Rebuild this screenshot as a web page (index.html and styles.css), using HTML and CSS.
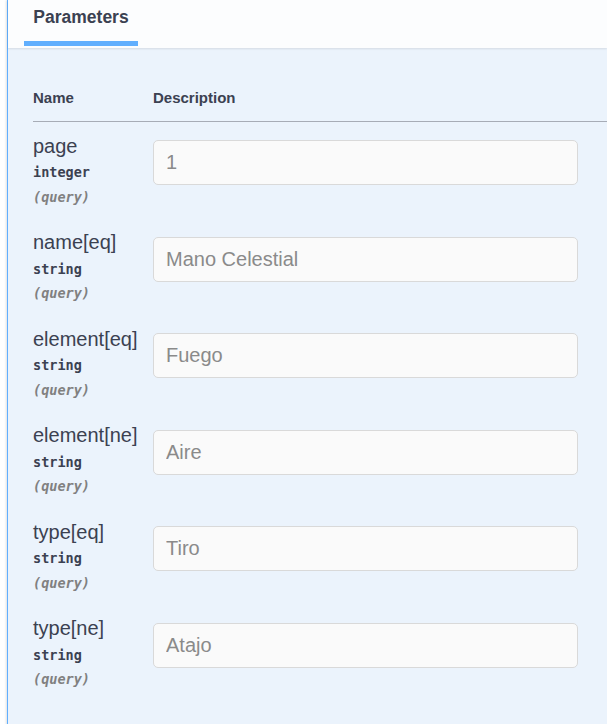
FILE: index.html
```html
<!DOCTYPE html>
<html>
<head>
<meta charset="utf-8">
<link rel="stylesheet" href="styles.css">
</head>
<body>
<div class="opblock">
  <div class="section-header">
    <div class="tab-item">
      <h4 class="tab-title">Parameters</h4>
      <div class="tab-bar"></div>
    </div>
  </div>
  <div class="table-container">
    <div class="thead">
      <div class="col-name">Name</div>
      <div class="col-desc">Description</div>
    </div>
    <div class="row">
      <div class="col-name">
        <div class="p-name">page</div>
        <div class="p-type">integer</div>
        <div class="p-in">(query)</div>
      </div>
      <div class="col-desc"><input class="p-input" type="text" placeholder="1"></div>
    </div>
    <div class="row">
      <div class="col-name">
        <div class="p-name">name[eq]</div>
        <div class="p-type">string</div>
        <div class="p-in">(query)</div>
      </div>
      <div class="col-desc"><input class="p-input" type="text" placeholder="Mano Celestial"></div>
    </div>
    <div class="row">
      <div class="col-name">
        <div class="p-name">element[eq]</div>
        <div class="p-type">string</div>
        <div class="p-in">(query)</div>
      </div>
      <div class="col-desc"><input class="p-input" type="text" placeholder="Fuego"></div>
    </div>
    <div class="row">
      <div class="col-name">
        <div class="p-name">element[ne]</div>
        <div class="p-type">string</div>
        <div class="p-in">(query)</div>
      </div>
      <div class="col-desc"><input class="p-input" type="text" placeholder="Aire"></div>
    </div>
    <div class="row">
      <div class="col-name">
        <div class="p-name">type[eq]</div>
        <div class="p-type">string</div>
        <div class="p-in">(query)</div>
      </div>
      <div class="col-desc"><input class="p-input" type="text" placeholder="Tiro"></div>
    </div>
    <div class="row">
      <div class="col-name">
        <div class="p-name">type[ne]</div>
        <div class="p-type">string</div>
        <div class="p-in">(query)</div>
      </div>
      <div class="col-desc"><input class="p-input" type="text" placeholder="Atajo"></div>
    </div>
  </div>
</div>
</body>
</html>
```

FILE: styles.css
```css
html, body {
  margin: 0;
  padding: 0;
  background: #ffffff;
}

body {
  font-family: "Liberation Sans", Arial, sans-serif;
  color: #3b4151;
  overflow: hidden;
}

.opblock {
  margin-left: 7px;
  border-left: 1px solid #61affe;
  background: #ebf3fc;
  box-shadow: -1px 0 2px rgba(0, 0, 0, 0.12);
  min-height: 724px;
}

.section-header {
  height: 48px;
  background: #fcfdfe;
  box-shadow: 0 1px 2px rgba(0, 0, 0, 0.1);
  display: flex;
  align-items: flex-start;
  position: relative;
}

.tab-item {
  margin-left: 16px;
  width: 114px;
  display: flex;
  flex-direction: column;
  align-items: center;
  padding-top: 7px;
}

.tab-title {
  margin: 0;
  font-size: 17.5px;
  line-height: 20px;
  font-weight: 700;
  color: #3b4151;
}

.tab-bar {
  margin-top: 14px;
  width: 114px;
  height: 5px;
  background: #61affe;
}

.table-container {
  padding: 26px 0 25px 25px;
}

.thead {
  display: flex;
  padding: 15px 0;
  border-bottom: 1px solid #a7acb6;
  font-size: 15px;
  line-height: 17px;
  font-weight: 700;
  color: #3b4151;
}

.col-name {
  width: 120px;
  flex: none;
}

.col-desc {
  flex: 1;
}

.row {
  display: flex;
  padding: 12.5px 0;
}

.p-name {
  font-size: 20px;
  line-height: 22px;
  color: #3b4151;
}

.p-type {
  padding-top: 7.5px;
  font-family: "DejaVu Sans Mono", monospace;
  font-size: 13.5px;
  line-height: 16px;
  font-weight: 700;
  color: #3b4151;
}

.p-in {
  margin-top: 8.5px;
  padding-bottom: 1.5px;
  font-family: "DejaVu Sans Mono", monospace;
  font-size: 13.5px;
  line-height: 16px;
  font-weight: 700;
  font-style: italic;
  color: #808080;
}

.p-input {
  display: block;
  box-sizing: border-box;
  margin: 5.5px 0 0 0;
  width: 425px;
  height: 45px;
  padding: 0 12px;
  border: 1px solid #d9d9d9;
  border-radius: 5px;
  background: #fafafa;
  font-family: "Liberation Sans", Arial, sans-serif;
  font-size: 20px;
  color: #3b4151;
  outline: none;
}

.p-input::placeholder {
  color: #8a8a8a;
  opacity: 1;
}
```
